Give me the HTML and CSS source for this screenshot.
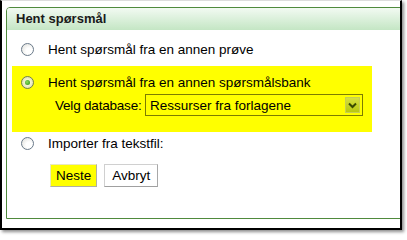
FILE: index.html
```html
<!DOCTYPE html>
<html>
<head>
<meta charset="utf-8">
<link rel="stylesheet" href="styles.css">
</head>
<body>
<div class="frame">
  <div class="panel">
    <div class="header">Hent spørsmål</div>
    <div class="content">
      <div class="row first">
        <span class="radio"></span>
        <span class="label">Hent spørsmål fra en annen prøve</span>
      </div>
      <div class="highlight">
        <div class="row">
          <span class="radio checked"><span class="dot"></span></span>
          <span class="label">Hent spørsmål fra en annen spørsmålsbank</span>
        </div>
        <div class="dbrow">
          <span class="dblabel">Velg database:</span>
          <div class="select">
            <span class="selval">Ressurser fra forlagene</span>
            <span class="arrow">
              <svg width="9" height="7" viewBox="0 0 9 7"><path d="M1 1.5 L4.5 5 L8 1.5" fill="none" stroke="#3a4a00" stroke-width="2"/></svg>
            </span>
          </div>
        </div>
      </div>
      <div class="row third">
        <span class="radio"></span>
        <span class="label">Importer fra tekstfil:</span>
      </div>
      <div class="buttons">
        <span class="btn yellow">Neste</span>
        <span class="btn wide">Avbryt</span>
      </div>
    </div>
  </div>
</div>
</body>
</html>
```
FILE: styles.css
```css
html, body {
  margin: 0;
  padding: 0;
  background: #fff;
}
body {
  width: 407px;
  height: 236px;
  overflow: hidden;
  font-family: "Liberation Sans", Arial, sans-serif;
  font-size: 13.5px;
  color: #000;
}
.frame {
  border-left: 2px solid #000;
  border-right: 2px solid #000;
  border-bottom: 2px solid #000;
  border-top: 1px solid #ddd;
  box-sizing: border-box;
  width: 402px;
  height: 230px;
  overflow: hidden;
  box-shadow: 2px 2px 3px rgba(0, 0, 0, 0.45);
  padding: 6px 0 0 4px;
}
.panel {
  width: 420px;
  height: 212px;
  border: 1px solid #4f8a3c;
  border-top-left-radius: 4px;
  box-sizing: border-box;
}
.header {
  height: 22px;
  line-height: 21px;
  padding-left: 9px;
  font-size: 13px;
  font-weight: bold;
  color: #1a1a1a;
  background: linear-gradient(#f2faf2, #c4e6c4);
  border-top-left-radius: 3px;
}
.content {
  padding-left: 5px;
}
.row {
  display: flex;
  align-items: center;
  height: 20px;
}
.row.first {
  margin-top: 9px;
}
.radio {
  width: 11px;
  height: 11px;
  border: 1px solid #6a7a8a;
  border-radius: 50%;
  background: radial-gradient(circle at 65% 65%, #ffffff 30%, #dcdcd6 100%);
  margin-left: 9px;
  margin-right: 14px;
  display: flex;
  align-items: center;
  justify-content: center;
  flex: none;
}
.radio.checked {
  border-color: #6f7f50;
  background: radial-gradient(circle, #f4f4d0 40%, #d0d098 100%);
}
.dot {
  width: 5px;
  height: 5px;
  border-radius: 50%;
  background: radial-gradient(circle at 40% 40%, #90e060, #208a10);
}
.highlight {
  background: #ffff00;
  width: 360px;
  margin-top: 7px;
  padding: 6px 0 6px 0;
  height: 66px;
  box-sizing: border-box;
}
.dbrow {
  display: flex;
  align-items: center;
  margin-top: 2px;
  padding-left: 43px;
}
.dblabel {
  width: 90px;
  white-space: nowrap;
  letter-spacing: -0.2px;
}
.select {
  width: 218px;
  height: 22px;
  border: 1px solid #7c7c00;
  box-sizing: border-box;
  display: flex;
  align-items: center;
  justify-content: space-between;
  padding-left: 4px;
  padding-right: 2px;
}
.arrow {
  width: 15px;
  height: 16px;
  background: linear-gradient(#d6e040, #b8c810);
  border: 1px solid #c8d050;
  box-sizing: border-box;
  display: flex;
  align-items: center;
  justify-content: center;
}
.row.third {
  margin-top: 1px;
}
.buttons {
  display: flex;
  gap: 7px;
  margin-top: 11px;
  padding-left: 38px;
}
.btn {
  height: 23px;
  line-height: 21px;
  box-sizing: border-box;
  border: 1px solid #d0d0d0;
  border-right-color: #a8a8a8;
  border-bottom-color: #a0a0a0;
  background: #fff;
  padding: 0 5px;
  color: #000;
}
.btn.wide {
  padding: 0 7px;
}
.btn.yellow {
  background: #ffff00;
  border-color: #e8e8c0;
  border-right-color: #b0b0a0;
  border-bottom-color: #b0b0a0;
}
```
